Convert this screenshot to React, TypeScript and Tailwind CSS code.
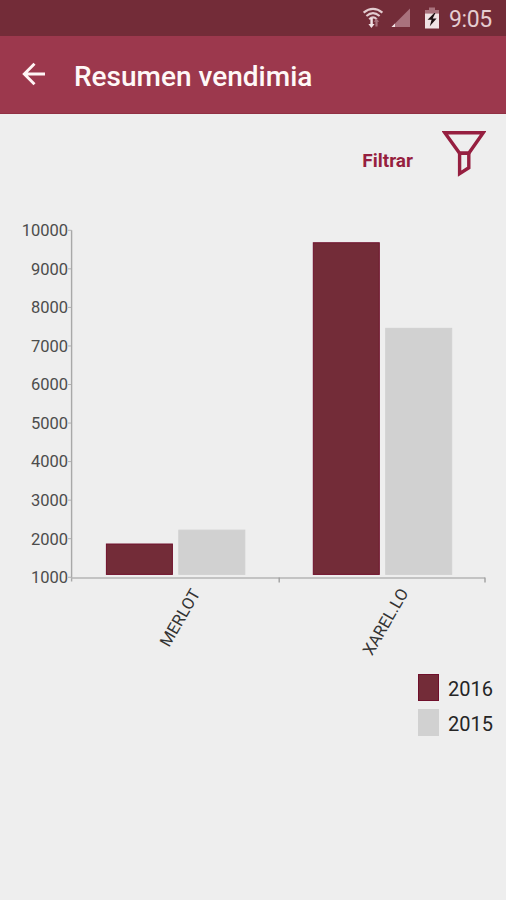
import React from "react";

type Harvest = {
  name: string;
  values: number[];
  labelX: number;
  labelY: number;
};

const SERIES = [
  { year: "2016", color: "#732c38", border: "#6f0f2b" },
  { year: "2015", color: "#d1d1d1", border: "#d1d1d1" },
];

const HARVESTS: Harvest[] = [
  { name: "MERLOT", values: [1875, 2235], labelX: 169, labelY: 648 },
  { name: "XAREL.LO", values: [9690, 7470], labelX: 372, labelY: 656.5 },
];

const TICKS = [10000, 9000, 8000, 7000, 6000, 5000, 4000, 3000, 2000, 1000];

// chart coordinates start under the filter row
const CHART_TOP = 194;
const AXIS_TOP = 230.3 - CHART_TOP;
const STEP = 38.55;
const BASE = 574.5 - CHART_TOP;

const StatusBar = () => (
  <div className="h-9 shrink-0 bg-[#732c38] flex justify-end items-center pr-[14px]">
    <svg className="w-[22px] h-[22px]" viewBox="0 0 22 22" fill="none">
      <g stroke="#e3ccd0" strokeWidth="2.1">
        <path d="M1.6 5.6Q11 -1.8 20.4 5.6" />
        <path d="M4.4 9Q11 3.4 17.6 9" />
        <path d="M7.2 12.2Q11 8.6 14.8 12.2" />
      </g>
      <path d="M8.4 11h2.4v6h1.8L9.4 21l-3-4h2z" fill="#f0e2e4" />
      <path d="M13.4 19.4v-4.6h-1.6l2.7-3.2 2.7 3.2h-1.6v4.6z" fill="#a9747e" />
    </svg>
    <svg className="w-5 h-5 ml-[7px]" viewBox="0 0 20 20">
      <path d="M19 0.5V19H0.5z" fill="#a9727d" />
      <path d="M4 15.5V19H0.5z" fill="#f3e4e6" />
    </svg>
    <svg className="w-4 h-[22px] ml-[13px]" viewBox="0 0 16 22">
      <path d="M5 0.5h6v2.6h4v4H1v-4h4z" fill="#a9727d" />
      <path d="M1 6.6h14V21.5H1z" fill="#f0e2e4" />
      <path d="M10.2 6 3.6 12.8h4L5.8 19.3 12.6 11.4H8.7L11.4 6z" fill="#1d1012" />
    </svg>
    <span className="ml-[9px] mt-[3px] w-[43px] text-[23px] leading-9 text-[#e5cdd1] whitespace-nowrap tracking-[-0.4px]">
      9:05
    </span>
  </div>
);

const Header = () => (
  <header className="h-[78px] shrink-0 bg-[#9c384d] border-b border-[#913044] flex items-center pl-[21px]">
    <svg
      className="w-[25px] h-6 -mt-px"
      viewBox="0 0 25 24"
      fill="none"
      stroke="#fff5f5"
      strokeWidth="2.9"
    >
      <path d="M24 12H3M13.5 1.8 3.3 12l10.2 10.2" />
    </svg>
    <h1 className="ml-7 mt-[5px] text-[28px] leading-8 font-medium text-[#fff8f7] whitespace-nowrap">
      Resumen vendimia
    </h1>
  </header>
);

const Filter = () => (
  <div className="h-20 shrink-0 flex justify-end pr-5 pt-4">
    <button className="flex items-start text-[#961f40]">
      <span className="mt-[19px] mr-[29px] text-[19px] leading-6 font-bold">Filtrar</span>
      <svg
        className="w-11 h-[47px]"
        viewBox="0 0 44 47"
        fill="none"
        stroke="currentColor"
        strokeWidth="3.4"
      >
        <path d="M2.8 2.7h38.4L26.8 23.3H17.6z" />
        <path d="M17.6 23.3h9.2v14.5l-9.2 5.8z" />
      </svg>
    </button>
  </div>
);

const Chart = () => (
  <svg className="w-[506px] h-[476px] shrink-0" viewBox="0 0 506 476">
    {TICKS.map((tick, i) => (
      <g key={tick}>
        <path d={`M68 ${AXIS_TOP + i * STEP}h3.5`} stroke="#b0b0b0" />
        <text
          x="68"
          y={AXIS_TOP + i * STEP + 5.8}
          textAnchor="end"
          fontSize="16.5"
          fill="#4c4c4c"
        >
          {tick}
        </text>
      </g>
    ))}
    <path d={`M71.6 ${AXIS_TOP}V${BASE + 7}`} stroke="#a8a8a8" strokeWidth="1.4" />
    <path d={`M71 ${BASE + 3.5}H485`} stroke="#b4b4b4" strokeWidth="1.7" />
    <path d={`M279.2 ${BASE + 3}v5M485 ${BASE + 3}v5`} stroke="#a0a0a0" strokeWidth="1.4" />

    {HARVESTS.map((harvest, h) => (
      <g key={harvest.name}>
        {harvest.values.map((value, i) => {
          const y = AXIS_TOP + ((10000 - value) / 1000) * STEP;
          return (
            <rect
              key={SERIES[i].year}
              x={106.4 + h * 206.9 + i * 72.4}
              y={y + 0.5}
              width="66"
              height={BASE - y - 0.6}
              fill={SERIES[i].color}
              stroke={SERIES[i].border}
            />
          );
        })}
        <text
          transform={`translate(${harvest.labelX} ${harvest.labelY - CHART_TOP}) rotate(-60)`}
          fontSize="16.5"
          fill="#333333"
        >
          {harvest.name}
        </text>
      </g>
    ))}
  </svg>
);

const Legend = () => (
  <div className="flex flex-col items-end gap-2 pt-1 pr-[13px]">
    {SERIES.map((item) => (
      <div key={item.year} className="flex items-center h-[27px]">
        <div
          className="w-[21px] h-[27px] border"
          style={{ backgroundColor: item.color, borderColor: item.border }}
        />
        <span className="ml-[9px] mt-0.5 w-[45px] text-xl text-[#252525]">{item.year}</span>
      </div>
    ))}
  </div>
);

const App = () => {
  return (
    <div className="w-[506px] h-[900px] overflow-hidden bg-[#eeeeee] flex flex-col font-[Roboto,sans-serif]">
      <StatusBar />
      <Header />
      <Filter />
      <Chart />
      <Legend />
    </div>
  );
};

export default App;
